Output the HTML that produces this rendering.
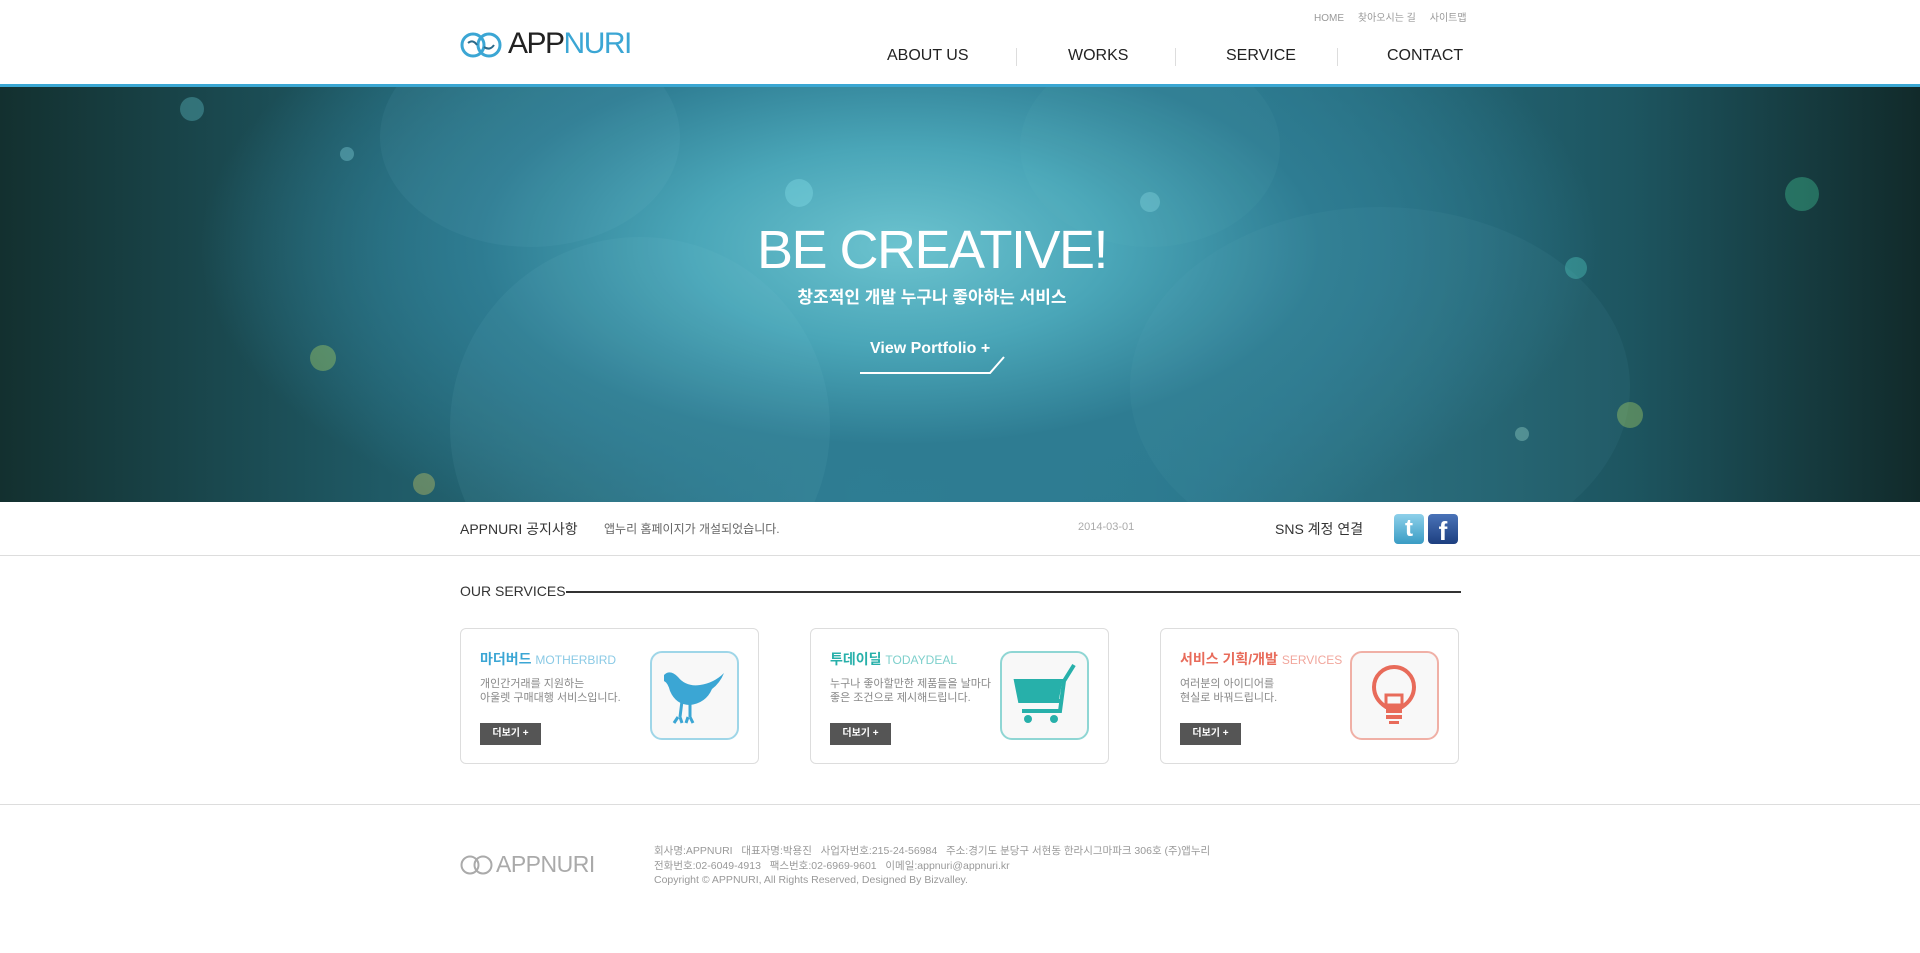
<!DOCTYPE html>
<html><head><meta charset="utf-8"><style>
*{margin:0;padding:0;box-sizing:border-box}
body{width:1920px;height:953px;background:#fff;font-family:"Liberation Sans","Noto Sans CJK KR",sans-serif;position:relative;overflow:hidden;color:#333}
.a{position:absolute;white-space:nowrap}
.hero{position:absolute;left:0;top:84px;width:1920px;height:418px;border-top:3px solid #3aa7d3;
background:radial-gradient(ellipse 700px 330px at 900px 160px,#6cc3cf 0%,#4aa6b8 30%,#2e7c92 60%,rgba(20,60,70,0) 100%),linear-gradient(90deg,#13302f 0%,#1f5a66 20%,#2f7f95 45%,#2c7a8f 60%,#1d5560 85%,#112a2a 100%);overflow:hidden}
.b{position:absolute;border-radius:50%}
.nav{font-size:16px;color:#222;top:47px}
.sep{position:absolute;top:48px;width:1px;height:18px;background:#ddd}
.card{position:absolute;top:628px;width:299px;height:136px;border:1px solid #ddd;border-radius:6px;background:#fff}
.card h3{position:absolute;left:19px;top:20px;font-size:14px;font-weight:bold}
.card h3 span{font-weight:normal;font-size:12px;opacity:.6}
.card p{position:absolute;left:19px;top:48px;font-size:11px;line-height:14px;color:#888}
.card .btn{position:absolute;left:19px;top:94px;width:61px;height:22px;background:#555;color:#fff;font-size:10px;font-weight:bold;text-align:center;line-height:22px}
.card .ic{position:absolute;left:189px;top:22px;width:89px;height:89px;border:2px solid;border-radius:12px;background:#f8f8f8}
.ft{font-size:10.5px;color:#999;left:654px}
</style></head><body>
<svg class="a" style="left:460px;top:31px" width="44" height="28" viewBox="0 0 44 28"><circle cx="13" cy="14" r="11" fill="none" stroke="#3ba6d4" stroke-width="3"/><circle cx="29" cy="14" r="11" fill="none" stroke="#3ba6d4" stroke-width="3"/><path d="M8 12q5-4 9 2M24 16q6 4 10-2" stroke="#2b6a8a" stroke-width="2" fill="none"/></svg>
<div class="a" style="left:508px;top:27px;font-size:30px;letter-spacing:-1.5px;color:#222">APP<span style="color:#3ba6d4">NURI</span></div>
<div class="a" style="left:1314px;top:9px;font-size:10px;color:#999">HOME &nbsp;&nbsp;&nbsp; 찾아오시는 길 &nbsp;&nbsp;&nbsp; 사이트맵</div>
<div class="a nav" style="left:887px">ABOUT US</div>
<div class="sep" style="left:1016px"></div>
<div class="a nav" style="left:1068px">WORKS</div>
<div class="sep" style="left:1175px"></div>
<div class="a nav" style="left:1226px">SERVICE</div>
<div class="sep" style="left:1337px"></div>
<div class="a nav" style="left:1387px">CONTACT</div>
<div class="hero">
<div class="b" style="left:450px;top:150px;width:380px;height:380px;background:rgba(140,210,220,.07)"></div>
<div class="b" style="left:1130px;top:120px;width:500px;height:360px;background:rgba(120,190,200,.07)"></div>
<div class="b" style="left:380px;top:-60px;width:300px;height:220px;background:rgba(160,220,230,.06)"></div>
<div class="b" style="left:1020px;top:-40px;width:260px;height:200px;background:rgba(120,200,210,.06)"></div>
<div class="b" style="left:785px;top:92px;width:28px;height:28px;background:rgba(130,220,230,.4)"></div>
<div class="b" style="left:1785px;top:90px;width:34px;height:34px;background:rgba(60,180,140,.45)"></div>
<div class="b" style="left:1565px;top:170px;width:22px;height:22px;background:rgba(80,200,190,.4)"></div>
<div class="b" style="left:310px;top:258px;width:26px;height:26px;background:rgba(170,210,100,.4)"></div>
<div class="b" style="left:1617px;top:315px;width:26px;height:26px;background:rgba(170,210,100,.4)"></div>
<div class="b" style="left:413px;top:386px;width:22px;height:22px;background:rgba(200,200,100,.4)"></div>
<div class="b" style="left:180px;top:10px;width:24px;height:24px;background:rgba(100,200,210,.35)"></div>
<div class="b" style="left:1515px;top:340px;width:14px;height:14px;background:rgba(150,210,200,.4)"></div>
<div class="b" style="left:1140px;top:105px;width:20px;height:20px;background:rgba(140,220,230,.35)"></div>
<div class="b" style="left:340px;top:60px;width:14px;height:14px;background:rgba(140,220,230,.35)"></div>
<div class="a" style="left:0;width:1864px;text-align:center;top:132px;font-size:54px;color:#fff;letter-spacing:-1.5px">BE CREATIVE!</div>
<div class="a" style="left:0;width:1864px;text-align:center;top:196px;font-size:17px;font-weight:bold;color:#fff">창조적인 개발 누구나 좋아하는 서비스</div>
<div class="a" style="left:870px;top:253px;font-size:16px;font-weight:bold;color:#fff">View Portfolio +</div>
<svg class="a" style="left:858px;top:260px" width="150" height="30"><path d="M2 26H132L146 10" stroke="#fff" stroke-width="2" fill="none"/></svg>
</div>
<div class="a" style="left:0;top:555px;width:1920px;height:1px;background:#ddd"></div>
<div class="a" style="left:460px;top:519px;font-size:14px;color:#333">APPNURI 공지사항</div>
<div class="a" style="left:604px;top:520px;font-size:12px;color:#666">앱누리 홈페이지가 개설되었습니다.</div>
<div class="a" style="left:1078px;top:521px;font-size:11px;color:#aaa">2014-03-01</div>
<div class="a" style="left:1275px;top:519px;font-size:14px;color:#333">SNS 계정 연결</div>
<div class="a" style="left:1394px;top:514px;width:30px;height:30px;border-radius:4px;background:linear-gradient(#8dd0ea,#3a9cc4);color:#fff;font-weight:bold;font-size:24px;text-align:center;line-height:30px">t</div>
<div class="a" style="left:1428px;top:514px;width:30px;height:30px;border-radius:4px;background:linear-gradient(#4a73b8,#1d3f80);color:#fff;font-weight:bold;font-size:26px;text-align:center;line-height:34px">f</div>
<div class="a" style="left:460px;top:583px;font-size:14px;color:#333">OUR SERVICES</div>
<div class="a" style="left:566px;top:591px;width:895px;height:2px;background:#333"></div>
<div class="card" style="left:460px"><h3 style="color:#3ba6d4">마더버드 <span>MOTHERBIRD</span></h3><p>개인간거래를 지원하는<br>아울렛 구매대행 서비스입니다.</p><div class="btn">더보기 +</div>
<div class="ic" style="border-color:#9fd6e8"><svg width="85" height="85" viewBox="0 0 85 85"><path d="M12 22q6-6 14 2q8 10 22 8q14-2 24-12q-4 10-12 16q-6 14-22 16q-14 0-20-14q-2-8-6-10z" fill="#3ba6d4"/><path d="M30 48l-2 16M38 50l0 14M26 64l-4 6M28 64l2 6M36 64l-2 6M38 64l3 6" stroke="#3ba6d4" stroke-width="3"/></svg></div></div>
<div class="card" style="left:810px"><h3 style="color:#27b0aa">투데이딜 <span>TODAYDEAL</span></h3><p>누구나 좋아할만한 제품들을 날마다<br>좋은 조건으로 제시해드립니다.</p><div class="btn">더보기 +</div>
<div class="ic" style="border-color:#8fd6d4"><svg width="85" height="85" viewBox="0 0 85 85"><path d="M72 12l-10 16H14l4 20h40M62 28l-4 30H20" stroke="#27b0aa" stroke-width="4" fill="none"/><path d="M16 30h44l-3 16H19z" fill="#27b0aa"/><circle cx="26" cy="66" r="4" fill="#27b0aa"/><circle cx="52" cy="66" r="4" fill="#27b0aa"/></svg></div></div>
<div class="card" style="left:1160px"><h3 style="color:#e86b5a">서비스 기획/개발 <span>SERVICES</span></h3><p>여러분의 아이디어를<br>현실로 바꿔드립니다.</p><div class="btn">더보기 +</div>
<div class="ic" style="border-color:#f0b0a6"><svg width="85" height="85" viewBox="0 0 85 85"><path d="M34 54q-12-8-12-20a20 20 0 0 1 40 0q0 12-12 20z" fill="none" stroke="#e86b5a" stroke-width="4"/><rect x="34" y="42" width="16" height="10" fill="none" stroke="#e86b5a" stroke-width="3"/><rect x="34" y="56" width="16" height="4" fill="#e86b5a"/><rect x="34" y="62" width="16" height="4" fill="#e86b5a"/><rect x="37" y="68" width="10" height="3" fill="#e86b5a"/></svg></div></div>
<div class="a" style="left:0;top:804px;width:1920px;height:1px;background:#ddd"></div>
<svg class="a" style="left:460px;top:854px" width="34" height="22" viewBox="0 0 34 22"><circle cx="10" cy="11" r="8.5" fill="none" stroke="#aaa" stroke-width="2"/><circle cx="23" cy="11" r="8.5" fill="none" stroke="#aaa" stroke-width="2"/></svg>
<div class="a" style="left:496px;top:851px;font-size:23px;letter-spacing:-0.5px;color:#aaa">APPNURI</div>
<div class="a ft" style="top:843px">회사명:APPNURI &nbsp; 대표자명:박용진 &nbsp; 사업자번호:215-24-56984 &nbsp; 주소:경기도 분당구 서현동 한라시그마파크 306호 (주)앱누리</div>
<div class="a ft" style="top:858px">전화번호:02-6049-4913 &nbsp; 팩스번호:02-6969-9601 &nbsp; 이메일:appnuri@appnuri.kr</div>
<div class="a ft" style="top:874px">Copyright © APPNURI, All Rights Reserved, Designed By Bizvalley.</div>
</body></html>
